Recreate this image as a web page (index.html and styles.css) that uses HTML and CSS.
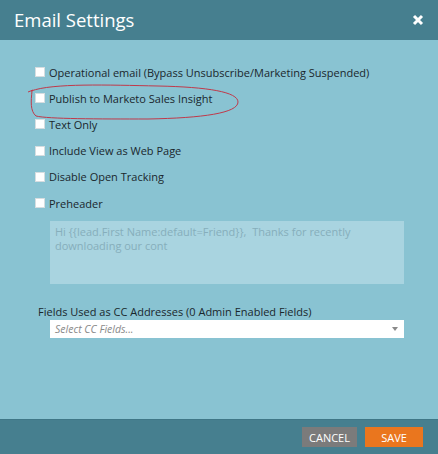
FILE: index.html
```html
<!DOCTYPE html>
<html>
<head>
<meta charset="utf-8">
<link rel="stylesheet" href="styles.css">
</head>
<body>
<div class="dialog">
  <div class="header">
    <span class="title">Email Settings</span>
    <svg class="close" width="12" height="12" viewBox="0 0 12 12"><path d="M2 2 L10 10 M10 2 L2 10" stroke="#fff" stroke-width="3" stroke-linecap="butt"/></svg>
  </div>
  <div class="body">
    <div class="row"><span class="box"></span><span>Operational email (Bypass Unsubscribe/Marketing Suspended)</span></div>
    <div class="row"><span class="box"></span><span>Publish to Marketo Sales Insight</span></div>
    <div class="row"><span class="box"></span><span>Text Only</span></div>
    <div class="row"><span class="box"></span><span>Include View as Web Page</span></div>
    <div class="row"><span class="box"></span><span>Disable Open Tracking</span></div>
    <div class="row"><span class="box"></span><span>Preheader</span></div>
    <div class="textarea">Hi {{lead.First Name:default=Friend}},&nbsp; Thanks for recently downloading our cont</div>
    <div class="cc-label">Fields Used as CC Addresses (0 Admin Enabled Fields)</div>
    <div class="select"><span>Select CC Fields...</span><span class="arrow"></span></div>
    <svg class="annot" width="220" height="40" viewBox="0 0 220 40"><path d="M3 8 C25 0 80 2 130 3 C180 4 210 9 210 19 C210 30 175 35 120 36 C70 36 20 36 8 33 C2 28 3 18 4 8 M0 9 L5 7" fill="none" stroke="#c0394a" stroke-width="1"/></svg>
  </div>
  <div class="footer">
    <button class="btn cancel">CANCEL</button>
    <button class="btn save">SAVE</button>
  </div>
</div>
</body>
</html>
```
FILE: styles.css
```css
* { box-sizing: border-box; }
html, body { margin: 0; padding: 0; }
body { font-family: "Open Sans", "Liberation Sans", sans-serif; background: #89c3d2; }
.dialog { width: 438px; height: 454px; display: flex; flex-direction: column; }
.header { height: 40px; background: #467f8f; display: flex; align-items: center; justify-content: space-between; padding: 0 14px 0 14px; }
.title { color: #fff; font-size: 18.5px; line-height: 20px; }
.close { display: block; }
.body { flex: 1; background: #89c3d2; padding: 19px 34px 0 35px; position: relative; }
.row { height: 26.2px; display: flex; align-items: center; font-size: 11px; color: #1a272d; }
.box { width: 10px; height: 10px; background: #fff; border: 1px solid #d6dde0; margin-right: 4px; flex: none; }
.textarea { margin: 5px 0 0 15px; width: 354px; height: 63px; background: #a9d4e0; color: #86aebb; font-size: 11px; line-height: 14px; padding: 4px 5px; }
.cc-label { margin: 20px 0 0 3px; font-size: 11px; line-height: 16px; color: #1a272d; }
.select { margin: 0 0 0 15px; width: 354px; height: 18px; background: #fff; display: flex; align-items: center; justify-content: space-between; padding: 0 6px 0 5px; font-size: 10.5px; font-style: italic; color: #8a8a8a; }
.arrow { width: 0; height: 0; border-left: 3px solid transparent; border-right: 3px solid transparent; border-top: 4px solid #8a8a8a; }
.annot { position: absolute; left: 28px; top: 43px; }
.footer { height: 35px; background: #467f8f; border-top: 1px solid #3f7787; display: flex; justify-content: flex-end; align-items: center; gap: 8px; padding: 0 15px 0 0; }
.btn { border: none; height: 20px; font-family: inherit; font-size: 11px; color: #fff; padding: 0; }
.cancel { background: #7b7b7b; width: 55px; }
.save { background: #ea761e; width: 58px; }
```
